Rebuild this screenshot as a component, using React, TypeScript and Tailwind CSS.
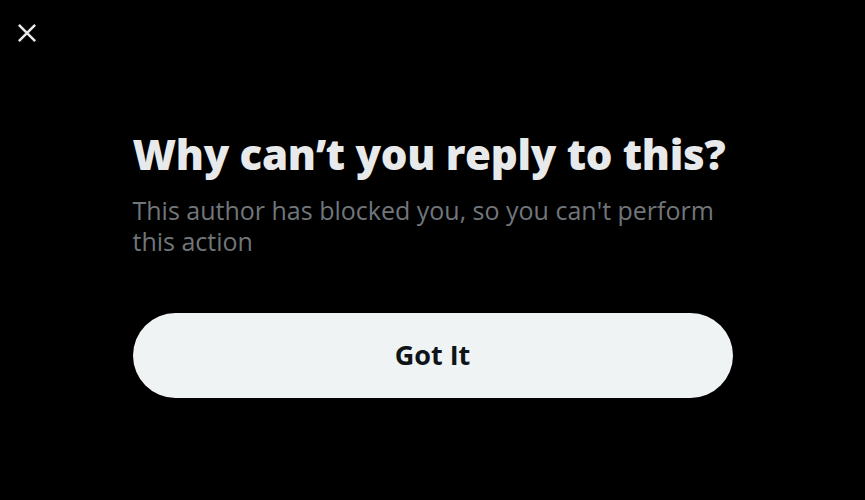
export default function App() {
  return (
    <div className="relative flex h-[500px] w-[865px] flex-col bg-black font-['Open_Sans',sans-serif]">
      <button
        type="button"
        aria-label="Close"
        className="absolute left-[12px] top-[18px] flex h-[30px] w-[30px] items-center justify-center text-[#e7e9ea]"
      >
        <svg viewBox="0 0 24 24" className="h-[26px] w-[26px]" fill="none" stroke="currentColor" strokeWidth="2.3">
          <path d="M4.5 4.5l15 15M19.5 4.5l-15 15" />
        </svg>
      </button>

      <div className="mx-auto mt-[126px] flex w-[600px] flex-col">
        <h1 className="text-[42px] font-extrabold leading-[56px] tracking-[-0.3px] text-[#e7e9ea]">
          Why can’t you reply to this?
        </h1>
        <p className="mt-[13px] text-[25px] leading-[31px] text-[#71767b]">
          This author has blocked you, so you can't perform this action
        </p>
        <button
          type="button"
          className="mt-[56px] h-[85px] w-full rounded-full bg-[#eff3f4] text-[27px] font-bold text-[#0f1419]"
        >
          Got It
        </button>
      </div>
    </div>
  );
}
